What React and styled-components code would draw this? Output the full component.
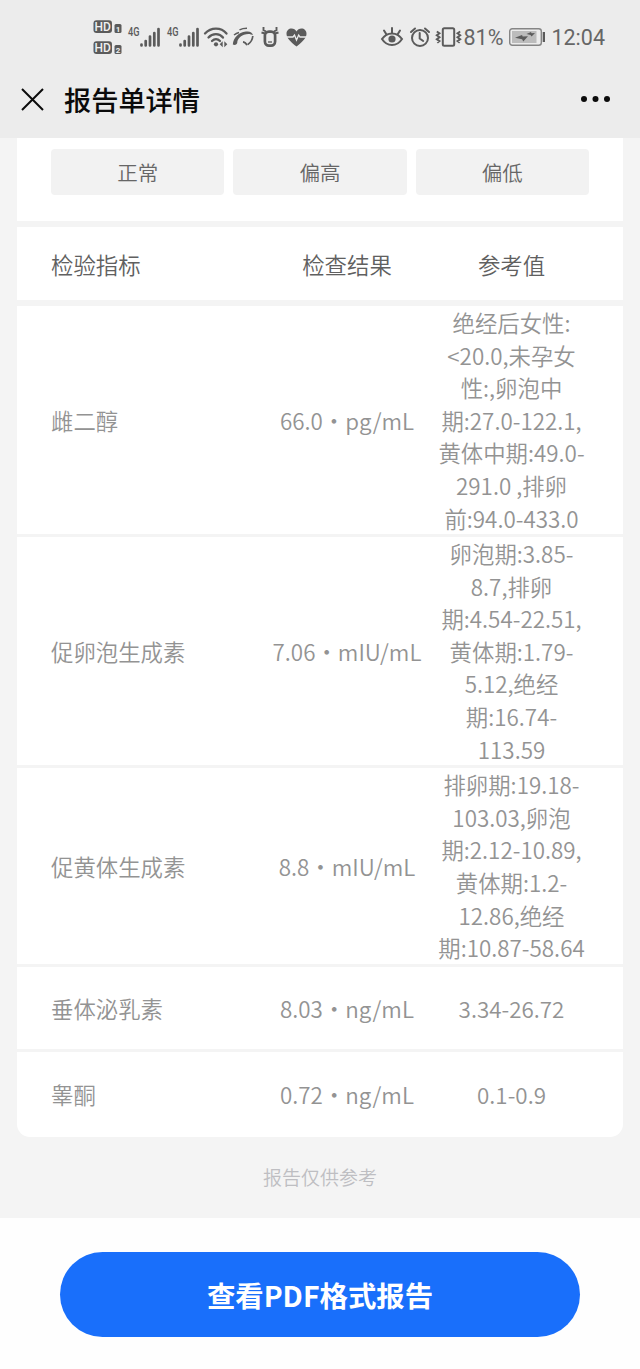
import React from 'react';
import styled, { createGlobalStyle } from 'styled-components';

const GlobalStyle = createGlobalStyle`
  * {
    box-sizing: border-box;
  }
  body {
    background-color: #f4f4f4;
    font-family: 'Noto Sans CJK SC', sans-serif;
    margin: 0;
  }
`;

const Page = styled.div`
  display: flex;
  flex-direction: column;
  height: 1369px;
  overflow: hidden;
  width: 640px;
`;
const Header = styled.header`
  background-color: #ececec;
  flex: none;
  height: 138px;
`;
const StatusBar = styled.div`
  align-items: center;
  color: #5b5b5b;
  display: flex;
  height: 74px;
  justify-content: space-between;
  padding: 0 35px 0 93px;
`;
const StatusGroup = styled.div`
  align-items: center;
  display: flex;
`;
const Icon = styled.svg`
  display: block;
  fill: none;
  flex: none;
  margin-left: ${props => props.$gap || 0}px;
  overflow: visible;
  stroke: currentColor;
  stroke-width: 2;
`;
const StatusText = styled.span`
  color: #666666;
  font-family: Roboto, sans-serif;
  font-size: 21.5px;
  line-height: 24px;
  margin-left: ${props => props.$gap}px;
  padding-top: 2px;
  white-space: nowrap;
`;
const NavBar = styled.div`
  align-items: center;
  color: #0b0b0b;
  display: flex;
  height: 52px;
  padding: 0 30px 2px 21px;
`;
const Title = styled.h1`
  flex: 1;
  font-size: 27.2px;
  font-weight: 500;
  line-height: 40px;
  margin: 0 0 0 20px;
`;
const Content = styled.main`
  flex: none;
  height: 1080px;
  padding: 0 17px;
`;
const Card = styled.section`
  background-color: #ffffff;
  margin-bottom: 6px;
`;
const Tabs = styled(Card)`
  display: grid;
  gap: 9px;
  grid-template-columns: repeat(3, 1fr);
  height: 83px;
  padding: 11px 34px 26px;
`;
const Tab = styled.button`
  background-color: #f2f2f2;
  border: 0;
  border-radius: 4px;
  color: #666666;
  font-family: inherit;
  font-size: 20.5px;
  font-weight: 350;
  line-height: 46px;
  padding: 0;
`;
const Row = styled.div`
  align-items: center;
  color: #939393;
  display: grid;
  font-size: 22.4px;
  font-weight: 350;
  grid-template-columns: 209px 174px 155px;
  height: ${props => props.$height}px;
  line-height: 32.6px;
  padding: 0 34px;
`;
const HeadRow = styled(Row)`
  color: #606060;
  height: 73px;
  padding-top: 1px;
`;
const Results = styled(Card)`
  border-radius: 0 0 13px 13px;
  margin-bottom: 0;

  ${Row} + ${Row} {
    border-top: 3px solid #f4f4f4;
  }
`;
const Cell = styled.div`
  text-align: ${props => (props.$left ? 'left' : 'center')};
  white-space: pre;
`;
const Note = styled.p`
  color: #bebec2;
  font-size: 19px;
  font-weight: 350;
  line-height: 28px;
  margin: 26px 0 0;
  text-align: center;
`;
const Footer = styled.footer`
  background-color: #fefefe;
  flex: 1;
  padding: 34px 60px 0;
`;
const PdfButton = styled.button`
  background-color: #196ffb;
  border: 0;
  border-radius: 43px;
  color: #ffffff;
  display: block;
  font-family: inherit;
  font-size: 28.4px;
  font-weight: 700;
  height: 85px;
  padding: 0;
  width: 520px;
`;

const HdIcon = () => (
  <Icon width="29" height="36" viewBox="0 0 29 36">
    {[1, 2].map(sim => (
      <g key={sim} transform={`translate(0 ${(sim - 1) * 21})`} stroke="none">
        <rect x="0.5" y="1.2" width="18.5" height="12.8" rx="3" fill="currentColor" />
        <text x="9.8" y="11.9" fill="#f0f0f0" fontFamily="Roboto" fontWeight="500" fontSize="12" textAnchor="middle">HD</text>
        <rect x="21.5" y="5" width="7" height="9" rx="1.5" fill="currentColor" />
        <text x="25" y="12.5" fill="#f0f0f0" fontFamily="Roboto" fontWeight="700" fontSize="8" textAnchor="middle">{sim}</text>
      </g>
    ))}
  </Icon>
);

const SignalIcon = ({ gap }) => (
  <Icon $gap={gap} width="32" height="20" viewBox="0 0 32 20">
    <text x="0" y="9.3" fill="currentColor" stroke="none" fontFamily="Roboto" fontWeight="500" fontSize="12.5" textLength="11.5" lengthAdjust="spacingAndGlyphs">4G</text>
    <path d="M13.5 17.5v1M17.7 14v4.5M22 9.5v9M26.3 6v12.5M30.5 2v16.5" strokeWidth="2.7" strokeLinecap="round" />
  </Icon>
);

const WifiIcon = () => (
  <Icon $gap={5} width="24" height="20" viewBox="0 0 24 20">
    <path d="M1 6.5C7 0 17 0 22.5 6.5M4.5 10.5c4-4.5 11-4.5 14.5 0M8 14c2.5-2.5 5.5-2.5 8 0" strokeWidth="2.3" strokeLinecap="round" />
    <circle cx="12" cy="17.3" r="2.1" fill="currentColor" stroke="none" />
    <path d="M18.7 14.2v6l-3-3zM20.3 14.2v6l3-3z" fill="currentColor" stroke="none" />
  </Icon>
);

const SwirlIcon = () => (
  <Icon $gap={4} width="22" height="20" viewBox="0 0 22 20">
    <path d="M.8 17.5C1.500 11 6 5.500 14 4.500c3.500-.5 6.500.5 7 3.800-2-1.500-5.500-2-9-.5C7.500 9.700 5.500 12.500 5.300 15.500c-.2 2.300-2.500 3-4.500 2z" fill="currentColor" stroke="none" />
    <path d="M7.500 2.800C9.500 1.800 12 1.300 15 1.300M2 8c1.500-1.200 3-2 5-2.500" strokeWidth="1.4" />
    <path d="M20.8 9c-.3 3.500-2 6.500-5 8.500M11 14.800c2 .3 3.200 1.500 4 3.500" strokeWidth="1.700" />
  </Icon>
);

const OxIcon = () => (
  <Icon $gap={7} width="18" height="20" viewBox="0 0 18 20">
    <path d="M2.5 0v3.200L5 4.500M15.500 0v3.200L13 4.500M.5 5.500l3.500 1M17.500 5.500l-3.500 1" strokeWidth="1.900" />
    <rect x="3.900" y="4.600" width="10.200" height="14" rx="4" strokeWidth="2.700" />
    <path d="M7 15h4" strokeWidth="1.300" />
  </Icon>
);

const HeartIcon = () => (
  <Icon $gap={7} width="21" height="19" viewBox="0 0 21 19">
    <path d="M10.5 18.500C4 13.500.5 10 .5 5.800.5 2.500 2.800.5 5.500.5c2.200 0 4 1.200 5 3 1-1.800 2.800-3 5-3 2.700 0 5 2 5 5.300 0 4.200-3.500 7.700-10 12.700z" fill="currentColor" stroke="none" />
    <path d="M1 9h6l1.500-2 2 5L12.700 7l1.300 2h6" stroke="#ececec" strokeWidth="1.300" />
  </Icon>
);

const EyeIcon = () => (
  <Icon width="22" height="20" viewBox="0 0 22 20">
    <path d="M1 12c5-7.500 15-7.500 20 0-5 8-15 8-20 0z" />
    <circle cx="11" cy="12" r="3.600" fill="currentColor" stroke="none" />
    <path d="M11 1v5M3 3.500l2.500 4M19 3.500l-2.500 4" strokeLinecap="round" />
  </Icon>
);

const AlarmIcon = () => (
  <Icon $gap={7} width="20" height="20" viewBox="0 0 20 20">
    <circle cx="10" cy="11" r="8" />
    <path d="M9.700 6v5.500l3.500 2.500M1 5l4-3.500M19 5l-4-3.500" strokeLinecap="round" />
  </Icon>
);

const VibrateIcon = () => (
  <Icon $gap={6} width="25" height="20" viewBox="0 0 25 20">
    <rect x="6.800" y="1.200" width="11.400" height="17.600" rx="1.500" />
    <path d="M.8 4.500L3.500 6.300.8 8.300l2.700 1.900-2.700 2 2.700 1.900-2.200 1.700M24.200 4.500l-2.700 1.800 2.700 2-2.700 1.900 2.700 2-2.700 1.900 2.200 1.700" strokeWidth="1.900" />
  </Icon>
);

const BatteryIcon = () => (
  <Icon $gap={6} width="37" height="18" viewBox="0 0 37 18">
    <rect x="0.700" y="0.700" width="31.600" height="16.600" rx="2.500" stroke="#858585" strokeWidth="1.400" />
    <rect x="3" y="3" width="24.500" height="12" fill="#bcbcbc" stroke="none" />
    <path d="M6 9.700l7-2.700.7 1.600 5.300-.4-4.700 5.300-1.200-2.300zM17.500 6l4.500-2 .5 1.200 3.500-.2-3.500 3.500-1-1.500z" fill="currentColor" stroke="none" />
    <rect x="33.700" y="4" width="2.300" height="10" fill="currentColor" stroke="none" />
  </Icon>
);

const CloseIcon = () => (
  <Icon width="23" height="23" viewBox="0 0 23 23">
    <path d="M1 1l21 21M22 1L1 22" />
  </Icon>
);

const MoreIcon = () => (
  <Icon width="29" height="6" viewBox="0 0 29 6">
    <g fill="currentColor" stroke="none">
      <circle cx="3" cy="3" r="3" />
      <circle cx="14.500" cy="3" r="3" />
      <circle cx="26" cy="3" r="3" />
    </g>
  </Icon>
);

const filters = ['正常', '偏高', '偏低'];

const results = [
  {
    name: '雌二醇',
    value: '66.0・pg/mL',
    range: ['绝经后女性:', '<20.0,未孕女', '性:,卵泡中', '期:27.0-122.1,', '黄体中期:49.0-', '291.0 ,排卵', '前:94.0-433.0'],
    height: 228,
  },
  {
    name: '促卵泡生成素',
    value: '7.06・mIU/mL',
    range: ['卵泡期:3.85-', '8.7,排卵', '期:4.54-22.51,', '黄体期:1.79-', '5.12,绝经', '期:16.74-', '113.59'],
    height: 231,
  },
  {
    name: '促黄体生成素',
    value: '8.8・mIU/mL',
    range: ['排卵期:19.18-', '103.03,卵泡', '期:2.12-10.89,', '黄体期:1.2-', '12.86,绝经', '期:10.87-58.64'],
    height: 199,
  },
  { name: '垂体泌乳素', value: '8.03・ng/mL', range: ['3.34-26.72'], height: 85 },
  { name: '睾酮', value: '0.72・ng/mL', range: ['0.1-0.9'], height: 88 },
];

const App = () => (
  <Page>
    <GlobalStyle />
    <Header>
      <StatusBar>
        <StatusGroup>
          <HdIcon />
          <SignalIcon gap={6} />
          <SignalIcon gap={7} />
          <WifiIcon />
          <SwirlIcon />
          <OxIcon />
          <HeartIcon />
        </StatusGroup>
        <StatusGroup>
          <EyeIcon />
          <AlarmIcon />
          <VibrateIcon />
          <StatusText $gap={3}>81%</StatusText>
          <BatteryIcon />
          <StatusText $gap={5}>12:04</StatusText>
        </StatusGroup>
      </StatusBar>
      <NavBar>
        <CloseIcon />
        <Title>报告单详情</Title>
        <MoreIcon />
      </NavBar>
    </Header>
    <Content>
      <Tabs>
        {filters.map(label => <Tab key={label}>{label}</Tab>)}
      </Tabs>
      <Card>
        <HeadRow>
          <Cell $left>检验指标</Cell>
          <Cell>检查结果</Cell>
          <Cell>参考值</Cell>
        </HeadRow>
      </Card>
      <Results>
        {results.map(({ name, value, range, height }) => (
          <Row key={name} $height={height}>
            <Cell $left>{name}</Cell>
            <Cell>{value}</Cell>
            <Cell>{range.join('\n')}</Cell>
          </Row>
        ))}
      </Results>
      <Note>报告仅供参考</Note>
    </Content>
    <Footer>
      <PdfButton>查看PDF格式报告</PdfButton>
    </Footer>
  </Page>
);

export default App;
